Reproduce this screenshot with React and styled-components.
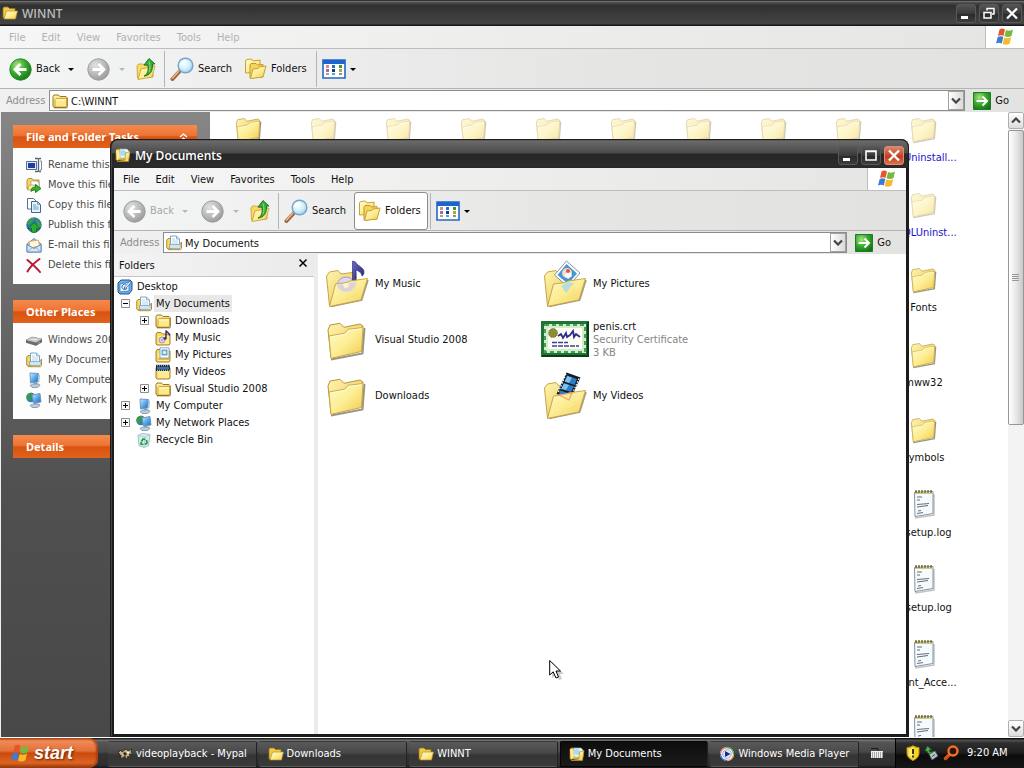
import React from "react";
import styled, { createGlobalStyle, css } from "styled-components";

const GlobalStyle = createGlobalStyle`
  * {
    box-sizing: border-box;
  }

  html, body, #root {
    height: 100%;
    margin: 0;
  }

  body {
    overflow: hidden;
    font-family: "DejaVu Sans Condensed", "Noto Sans", sans-serif;
    font-size: 11px;
    line-height: 14px;
    color: #111;
    cursor: default;
  }

  button, input {
    font: inherit;
    color: inherit;
    margin: 0;
    padding: 0;
    border: 0;
    background: none;
  }

  ul {
    list-style: none;
    margin: 0;
    padding: 0;
  }

  h1, h2 {
    margin: 0;
  }

  a {
    color: inherit;
    text-decoration: none;
  }
`;

/* ---------- Desktop ---------- */

const Desktop = styled.div`
  display: flex;
  flex-direction: column;
  height: 100vh;
  overflow: hidden;
  background: #fff;
`;

const Workspace = styled.main`
  position: relative;
  flex: 1;
  min-height: 0;
  display: flex;
`;

/* ---------- Windows ---------- */

const MainWindow = styled.section`
  flex: 1;
  min-width: 0;
  display: flex;
  flex-direction: column;
  background: #fff;
`;

const FloatingWindow = styled.section`
  position: absolute;
  top: 139px;
  left: 110px;
  right: 115px;
  bottom: 1px;
  display: flex;
  flex-direction: column;
  padding: 0 3px 3px 4px;
  border-radius: 8px 8px 0 0;
  overflow: hidden;
  background: linear-gradient(#2a2a2a, #6a6a6a 2px, #4a4a4a 14px, #262626 15px, #2c2c2c 28px, #1c1c1c 30px);
  box-shadow: inset 0 0 0 1px #1c1c1c, inset 2px 0 0 #444;
`;

const TitleBar = styled.header`
  display: flex;
  align-items: center;
  flex: none;
  height: ${(p) => (p.$floating ? "29px" : "26px")};
  padding: ${(p) => (p.$floating ? "3px 2px 0 1px" : "0 2px")};
  gap: 4px;
  ${(p) =>
    !p.$floating &&
    css`
      background: linear-gradient(#333 1px, #777 1px, #444 3px, #303030 6px, #3a3a3a 14px, #444 24px, #181818 25px);
    `}
`;

const WindowTitle = styled.h1`
  flex: 1;
  padding-top: 1px;
  font-family: "Open Sans", "Noto Sans", sans-serif;
  font-size: 12px;
  line-height: 16px;
  font-weight: 600;
  color: ${(p) => (p.$active ? "#fff" : "#b9b9b9")};
`;

const Caption = styled.button`
  display: flex;
  width: 20px;
  height: 19px;
  margin-left: -1px;
  border: 1px solid ${(p) => (p.$red ? "#e08a70" : "#585858")};
  border-radius: 3px;
  background: ${(p) =>
    p.$red ? "linear-gradient(#d98870, #c4492b 50%, #b93a18 52%, #e0714a)" : "linear-gradient(#555, #3a3a3a 50%, #2a2a2a 52%, #3c3c3c)"};
`;

const MenuBar = styled.nav`
  display: flex;
  flex: none;
  align-items: stretch;
  height: 23px;
  padding-left: 1px;
  border-bottom: 1px solid #bdbdbd;
  background: linear-gradient(to right, #f6f6f6, #e5e5e3);
  color: ${(p) => (p.$active ? "#111" : "#b2b2b2")};
`;

const MenuItem = styled.button`
  padding: 1px 8px 0;
`;

const Brand = styled.div`
  display: flex;
  align-items: center;
  justify-content: center;
  width: 39px;
  margin-left: auto;
  border-left: 1px solid #bdbdbd;
  background: #fff;
`;

const ToolBar = styled.div`
  display: flex;
  flex: none;
  align-items: center;
  height: 40px;
  padding: 1px 0 0 4px;
  border-bottom: 1px solid #b4b4b4;
  background: linear-gradient(to right, #f4f5f5, #e5e5e4 60%, #e2e2e1);
`;

const ToolButton = styled.button`
  display: flex;
  align-items: center;
  gap: 4px;
  flex: none;
  width: ${(p) => p.$width}px;
  height: 38px;
  padding-left: 5px;
  white-space: nowrap;
  color: ${(p) => (p.disabled ? "#a8a8a8" : "#111")};
  ${(p) =>
    p.$center &&
    css`
      justify-content: center;
      padding: 0;
    `}
  ${(p) =>
    p.$pressed &&
    css`
      border: 1px solid #8d8d8d;
      border-radius: 3px;
      background: #fff;
      padding-left: 4px;
    `}
`;

const Separator = styled.span`
  width: 1px;
  height: 36px;
  margin-left: ${(p) => p.$gap || 0}px;
  background: #b5b5b5;
`;

const AddressBar = styled.form`
  display: flex;
  flex: none;
  align-items: center;
  height: 23px;
  padding: 1px 15px 1px 6px;
  background: linear-gradient(to right, #f0f0f0, #e3e3e2);
`;

const AddressLabel = styled.label`
  width: 43px;
  color: #8d8d8d;
`;

const AddressField = styled.div`
  display: flex;
  flex: 1;
  align-items: center;
  gap: 3px;
  height: 21px;
  padding-left: 2px;
  border: 1px solid #8c8c8c;
  background: #fff;

  input {
    flex: 1;
    min-width: 0;
    padding-top: 2px;
    outline: none;
  }
`;

const DropButton = styled.button`
  display: flex;
  align-items: center;
  justify-content: center;
  width: 16px;
  height: 19px;
  border: 1px solid #a2a2a2;
  background: linear-gradient(to right, #fff, #dadada);
`;

const GoButton = styled.button`
  display: flex;
  align-items: center;
  gap: 4px;
  margin-left: 8px;
`;

const WindowBody = styled.div`
  display: flex;
  flex: 1;
  min-height: 0;
  background: #fff;
  border-left: ${(p) => (p.$edge ? "1px solid #eee" : "0")};
  border-bottom: ${(p) => (p.$edge ? "1px solid #fff" : "0")};
`;

/* ---------- Task pane ---------- */

const TaskPane = styled.aside`
  flex: none;
  display: flex;
  flex-direction: column;
  gap: 16px;
  width: 209px;
  padding: 13px 13px 0 12px;
  background: linear-gradient(#868686, #6a6a6a 30%, #505050 60%, #484848);
`;

const PanelHead = styled.h2`
  display: flex;
  align-items: center;
  justify-content: space-between;
  height: 23px;
  padding: 1px 8px 0 13px;
  font-family: "Noto Sans", sans-serif;
  font-size: 11px;
  font-weight: 700;
  color: #fff;
  background: linear-gradient(#f58a4c, #ee7434 45%, #d9530f 52%, #e0621c);
`;

const PanelList = styled.ul`
  padding: 7px 0 9px 13px;
  background: #fdfdfd;
  color: #4b4b4b;

  a {
    display: flex;
    align-items: center;
    gap: 6px;
    height: 20px;
    white-space: nowrap;
  }
`;

/* ---------- Icon view ---------- */

const IconGrid = styled.ul`
  flex: 1;
  min-width: 0;
  display: grid;
  grid-template-columns: repeat(10, 75px);
  grid-auto-rows: 75px;
  padding: 1px 0 0 1px;
  overflow: hidden;
`;

const IconCell = styled.li`
  display: flex;
  flex-direction: column;
  align-items: center;
  gap: 6px;
  grid-column: ${(p) => p.$column};
  color: ${(p) => (p.$compressed ? "#1a10c8" : "#111")};

  svg {
    opacity: ${(p) => (p.$hidden ? 0.5 : 1)};
  }
`;

const ScrollBar = styled.div`
  display: flex;
  flex-direction: column;
  flex: none;
  width: 16px;
  background: #f3f3f3;
`;

const ScrollButton = styled.button`
  display: flex;
  align-items: center;
  justify-content: center;
  height: 17px;
  border: 1px solid #b0b0b0;
  border-radius: 2px;
  background: linear-gradient(#fff, #dcdcdc);
`;

const ScrollTrack = styled.div`
  flex: 1;
  padding-top: 1px;
`;

const ScrollThumb = styled.div`
  display: flex;
  align-items: center;
  justify-content: center;
  height: 50%;
  border: 1px solid #979797;
  border-radius: 2px;
  background: linear-gradient(to right, #fff, #e8e8e8 50%, #c8c8c8);
`;

/* ---------- Folder tree ---------- */

const TreePane = styled.aside`
  flex: none;
  width: 204px;
  border-right: 4px solid #ececec;
`;

const TreeHead = styled.div`
  display: flex;
  align-items: center;
  justify-content: space-between;
  height: 23px;
  padding: 2px 6px 0 5px;
  border-bottom: 1px solid #c6c6c6;
  background: linear-gradient(to right, #f3f3f3, #ebebeb);

  button {
    display: flex;
    height: 17px;
  }
`;

const Tree = styled.ul`
  padding: 1px 0 0 3px;
`;

const TreeRow = styled.li`
  display: flex;
  align-items: center;
  height: 17px;
  padding-left: ${(p) => Math.max(0, p.$level - 1) * 19}px;
`;

const ExpandSlot = styled.span`
  display: flex;
  width: 19px;
  padding-left: 4px;
`;

const ExpandButton = styled.button`
  display: flex;
`;

const TreeLabel = styled.span`
  margin-left: 2px;
  padding: 2px 2px 1px 2px;
  white-space: nowrap;
  background: ${(p) => (p.$selected ? "#e8e8e8" : "transparent")};
`;

/* ---------- Tile view ---------- */

const TileGrid = styled.ul`
  flex: 1;
  display: grid;
  grid-template-columns: repeat(2, 218px);
  grid-auto-rows: 56px;
  align-content: start;
  padding: 1px 0 0 5px;
`;

const Tile = styled.li`
  display: flex;
  align-items: center;
  gap: 4px;
  line-height: 13px;

  small {
    display: block;
    font-size: 11px;
    color: #858585;
  }
`;

/* ---------- Taskbar ---------- */

const TaskBar = styled.footer`
  display: flex;
  flex: none;
  height: 30px;
  color: #fff;
  background: linear-gradient(#222 1px, #777 2px, #555 4px, #484848 14px, #333 16px, #2e2e2e 27px, #151515);
`;

const StartButton = styled.button`
  display: flex;
  align-items: center;
  gap: 3px;
  width: 98px;
  margin-right: 9px;
  padding-left: 10px;
  border-radius: 0 9px 9px 0;
  font-family: "Liberation Sans", sans-serif;
  font-size: 18px;
  font-weight: 700;
  font-style: italic;
  text-shadow: 1px 1px 2px #6a2400;
  background: linear-gradient(#a8400f, #f08a58 3px, #e47038 13px, #cc4a0c 15px, #dc6424 25px, #8c340a);
  box-shadow: inset -2px 0 2px #a8400f;
`;

const TaskButton = styled.button`
  display: flex;
  flex: 1;
  align-items: center;
  gap: 3px;
  min-width: 0;
  margin: 3px 1px 1px;
  padding: 1px 0 1px 8px;
  white-space: nowrap;
  border: 1px solid ${(p) => (p.$active ? "#050505" : "transparent")};
  border-right-color: #222;
  border-radius: 2px;
  background: ${(p) => (p.$active ? "linear-gradient(#0d0d0d, #1b1b1b)" : "linear-gradient(#5a5a5a, #484848 45%, #353535 55%, #3a3a3a)")};
`;

const KeyboardSlot = styled.div`
  display: flex;
  align-items: center;
  justify-content: center;
  width: 35px;
`;

const Tray = styled.div`
  display: flex;
  align-items: center;
  gap: 3px;
  width: 129px;
  padding-left: 9px;
  border-left: 1px solid #000;
  background: linear-gradient(#111 1px, #555 2px, #2e2e2e 5px, #1d1d1d 15px, #0c0c0c 17px, #161616);

  time {
    margin-left: 5px;
    white-space: nowrap;
  }
`;

const Pointer = styled.svg`
  position: absolute;
  left: 549px;
  top: 659px;
`;

const SharedDefs = styled.svg`
  position: absolute;
`;

/* ---------- Drawings ---------- */

const Gradients = () => (
  <SharedDefs width="0" height="0" aria-hidden="true">
    <defs>
      <linearGradient id="folder" x1="0" y1="0" x2="1" y2="1">
        <stop offset="0" stopColor="#fffbcc" />
        <stop offset="0.5" stopColor="#fdee94" />
        <stop offset="1" stopColor="#f0ca4c" />
      </linearGradient>
      <linearGradient id="folderBack" x1="0" y1="0" x2="1" y2="1">
        <stop offset="0" stopColor="#fff6b0" />
        <stop offset="1" stopColor="#e6bf48" />
      </linearGradient>
      <radialGradient id="green" cx="0.35" cy="0.3" r="0.8">
        <stop offset="0" stopColor="#a4e67c" />
        <stop offset="0.5" stopColor="#39a82c" />
        <stop offset="1" stopColor="#12701a" />
      </radialGradient>
      <radialGradient id="grey" cx="0.35" cy="0.3" r="0.8">
        <stop offset="0" stopColor="#e2e2e2" />
        <stop offset="0.6" stopColor="#b4b4b4" />
        <stop offset="1" stopColor="#959595" />
      </radialGradient>
      <radialGradient id="lens" cx="0.4" cy="0.35" r="0.7">
        <stop offset="0" stopColor="#fff" />
        <stop offset="0.6" stopColor="#cdeefb" />
        <stop offset="1" stopColor="#8ecbee" />
      </radialGradient>
      <linearGradient id="screen" x1="0" y1="0" x2="1" y2="1">
        <stop offset="0" stopColor="#d4efff" />
        <stop offset="0.5" stopColor="#5aabea" />
        <stop offset="1" stopColor="#2460c0" />
      </linearGradient>
      <linearGradient id="note" x1="0" y1="0" x2="1" y2="1">
        <stop offset="0" stopColor="#6a6ac8" />
        <stop offset="1" stopColor="#23236c" />
      </linearGradient>
    </defs>
  </SharedDefs>
);

const FolderShape = ({ size = 16 }) => (
  <svg width={size} height={size} viewBox="0 0 48 48">
    <path d="M8 44.500 39.500 38.500 41.500 13" fill="none" stroke="#6c6654" strokeWidth="2" opacity="0.7" />
    <path d="M5 15 7 10 17 8.300 21 12.300 37 9 40 11 38.500 36 8 43Z" fill="url(#folderBack)" stroke="#b8943a" strokeWidth="1" strokeLinejoin="round" />
    <path d="M6 21 21.500 18.300 25 14.300 40 12.500 38.500 36.500 8 43.300Z" fill="url(#folder)" stroke="#c8a444" strokeWidth=".9" strokeLinejoin="round" />
    <path d="M7.500 22 22 19.500 26 15.500 38.500 13.800" fill="none" stroke="#fffbe0" strokeWidth="1" />
  </svg>
);

const SmallFolder = () => (
  <svg width="16" height="16" viewBox="0 0 16 16">
    <path d="M1 13V3.500L2 2h4.500L8 3.500h6l1 1V13l-1 1.500H2z" fill="url(#folderBack)" stroke="#9c7616" />
    <path d="M3 13.500V6.500L4 5.500h10.500V13l-.5 1H3z" fill="#fde98a" stroke="#c69a2c" strokeWidth=".8" />
    <path d="M4 7h10" stroke="#fffbdc" />
    <path d="M2 15h13l.7-1.500V5" fill="none" stroke="#6e5c26" strokeWidth=".6" />
  </svg>
);

const OpenSmallFolder = ({ content }) => (
  <svg width="16" height="16" viewBox="0 0 16 16">
    <path d="M1 13V3l1-1h4l1.500 1.500H13V13z" fill="#f0cb4c" stroke="#94721a" strokeWidth=".8" />
    {content && (
      <>
        <path d="M5 2h7l2 2v7H5z" fill="#f2fbff" stroke="#8fa8b8" strokeWidth=".7" />
        <circle cx="8" cy="6" r="3" fill="#a8dcf4" />
        <path d="M2 14 1 3.500l3-.5 1 7z" fill="#fdeb96" />
        <path d="M2 14.500 10 13 10.500 6 15 4.500 13.500 14.500z" fill="url(#folder)" stroke="#b48c22" strokeWidth=".7" />
      </>
    )}
    {!content && <path d="M2 14 4.500 6H15.500L13.500 14z" fill="url(#folder)" stroke="#b48c22" strokeWidth=".7" />}
  </svg>
);

const DocsIcon = () => (
  <svg width="16" height="16" viewBox="0 0 16 16">
    <path d="M.7 13V5L2 3.500h3V14H2z" fill="#f6d960" stroke="#9c7616" strokeWidth=".8" />
    <path d="M4.500 1h6l3 3v8h-9z" fill="#fff" stroke="#6a9cc4" strokeWidth=".9" />
    <path d="M10.500 1v3h3" fill="#bfe2f8" stroke="#6a9cc4" strokeWidth=".7" />
    <path d="M6 4h3M6 6h6M6 8h6" stroke="#a4c8e4" strokeWidth=".8" />
    <path d="M3.500 13.500V9.500h10l1.500-2v5l-1 1z" fill="#d2e4ee" stroke="#7498b0" strokeWidth=".7" />
    <path d="M1.500 13.500 3 14.700h11.500l1-1.500V7" fill="none" stroke="#b88c20" />
  </svg>
);

const MediaFolder = ({ kind }) => (
  <svg width="16" height="16" viewBox="0 0 16 16">
    <path d="M1 14V4l1-1.500h4L7.500 4H15v10l-1 1H2z" fill="#f7d964" stroke="#9c7616" strokeWidth=".9" />
    <path d="M3 6h11v8H3z" fill="#fdeb96" />
    {kind === "music" && (
      <>
        <circle cx="7" cy="10" r="3" fill="#d8d2ee" stroke="#8878a8" strokeWidth=".7" />
        <circle cx="7" cy="10" r=".8" fill="#e05a30" />
        <path d="M11 8V.5c1 2 3.500 2 3.500 5" fill="none" stroke="#2c2878" strokeWidth="1.400" />
        <ellipse cx="10" cy="8.500" rx="1.600" ry="1.200" fill="#2c2878" />
      </>
    )}
    {kind === "pictures" && (
      <>
        <path d="M5 .800h9V11H5z" fill="#fff" stroke="#6c94b4" strokeWidth=".8" />
        <path d="M6.500 2.500h6v6h-6z" fill="#59a9dc" />
        <circle cx="9.500" cy="5.500" r="1.800" fill="#f6e5d8" />
        <path d="M3 12h11" stroke="#b88a24" />
      </>
    )}
    {kind === "videos" && (
      <>
        <path d="M1 .8h14V7H1z" fill="#1c2434" />
        <path d="M2 3h12v2.500H2z" fill="#3474b4" />
        <path d="M2 1.800h13M2 6.300h13" stroke="#fff" strokeDasharray="1 1" strokeWidth=".8" />
      </>
    )}
  </svg>
);

const DesktopIcon = () => (
  <svg width="16" height="16" viewBox="0 0 16 16">
    <path d="M1 4 4 1h9l2 2v8l-3 4H3l-2-2z" fill="#6cb0e4" stroke="#1c5498" />
    <path d="M3 5 12 3v9l-9 1z" fill="#eaf6ff" stroke="#2c6cac" strokeWidth=".7" />
    <path d="M9 5C6.500 4.500 4.500 6.500 5 8.500S9 11.500 10 9" fill="none" stroke="#2464a4" />
    <path d="M7 9.500 8 7.500 12.500 2.500 14 3.500 9 9z" fill="#fff" stroke="#2464a4" strokeWidth=".8" />
  </svg>
);

const ComputerIcon = ({ network }) => (
  <svg width="16" height="16" viewBox="0 0 16 16">
    {network && (
      <>
        <circle cx="5" cy="5.500" r="4.800" fill="#2c7cc8" />
        <path d="M1 3.500C3 0 6 0 7 2L4.500 5 5 8 2.500 9C1 7 0 5 1 3.500z" fill="#3c9c3c" />
      </>
    )}
    <path d={network ? "M6 3 14 1.500 15 10 7.500 11z" : "M4 1 12.500 1.500 12 10 4.500 11z"} fill="url(#screen)" stroke="#6c90b8" strokeWidth=".9" />
    <path d="M12.500 2.500 14 3l-.5 7-2 1" fill="#b4c6d6" opacity={network ? 0 : 1} />
    <path d="M8 11h3l.5 2H7.500z" fill="#8fa4b8" />
    <path d="M4 13.500 7 12h6l1 1.500-2.500 2H6z" fill="#bccbd8" stroke="#7088a0" strokeWidth=".7" />
  </svg>
);

const RecycleIcon = () => (
  <svg width="16" height="16" viewBox="0 0 16 16">
    <path d="M2 3.500 6 1.500l8 1-1.500 11L8 15.500l-5-2z" fill="#d9eef4" stroke="#9ab8c4" strokeWidth=".9" />
    <path d="M2 3.500 9 5l5-2.500M9 5 8 15" fill="none" stroke="#a4c4d0" strokeWidth=".8" />
    <path d="M5.500 9.500 7 7l2.500.5M10.500 8l.5 3-2 1.500M7.500 12.500 5 12l.3-2" fill="none" stroke="#22a03a" strokeWidth="1.700" />
  </svg>
);

const DriveIcon = () => (
  <svg width="16" height="16" viewBox="0 0 16 16">
    <path d="M0 8 6 5l10 2v3l-6 3.500L0 10.500z" fill="#6c6c6c" stroke="#555" strokeWidth=".5" />
    <path d="M0 8 6 5 16 7 10 10.500z" fill="#cecece" />
    <ellipse cx="8" cy="7.500" rx="3.500" ry="1.300" fill="#efefef" stroke="#999" strokeWidth=".5" />
    <path d="M12 11.500 14 10.300" stroke="#7cd07c" />
  </svg>
);

const RenameIcon = () => (
  <svg width="16" height="16" viewBox="0 0 16 16">
    <path d="M.5 4.500h10v8H.5z" fill="#e8eef8" stroke="#5a6a88" />
    <path d="M2 6h7v5H2z" fill="#1a3ea8" />
    <path d="M9 1.500h2.500L12.500 2l1-.5H15M12.500 2v12M9 14.500h2.500l1-.5 1 .5H15" fill="none" stroke="#54617a" strokeWidth="1.300" />
    <path d="M14 4h1.500v9H14" fill="none" stroke="#7a8aa4" />
  </svg>
);

const MoveIcon = () => (
  <svg width="16" height="16" viewBox="0 0 16 16">
    <path d="M1 12V3l1.500-1.500H6L7.500 3H13v9z" fill="#f6d764" stroke="#a07c1c" strokeWidth=".8" />
    <path d="M5 4h6l2 2v6H5z" fill="#fff" stroke="#88a" strokeWidth=".6" />
    <path d="M1.500 13 3.500 8H11v5z" fill="#fdeb96" stroke="#b08a28" strokeWidth=".6" />
    <path d="M5 14.500C5 11 7 10 9.500 10V7.500L15 11.500 9.500 15.500V13C8 13 6 13 5 14.500z" fill="#36b430" stroke="#0e6a18" strokeWidth=".8" />
  </svg>
);

const CopyIcon = () => (
  <svg width="16" height="16" viewBox="0 0 16 16">
    <path d="M1.500 1.500h6l2.500 2.500v8H1.500z" fill="#fff" stroke="#55708c" />
    <path d="M5.500 4.500h6l3 3v8h-9z" fill="#e4f3fc" stroke="#45678a" />
    <path d="M11.500 4.500v3h3M7 8h3M7 10h5.500M7 12h5.500" fill="none" stroke="#6b9cc4" />
  </svg>
);

const PublishIcon = () => (
  <svg width="16" height="16" viewBox="0 0 16 16">
    <circle cx="8" cy="8" r="7.300" fill="#2c74c0" stroke="#144c80" strokeWidth=".6" />
    <path d="M2 4C4 1 7 .7 9 1.200L6 5 3 8 1 7zM10 2c3 1 5 4 5 7l-3 4" fill="#38a444" />
    <path d="M8 5.500 14 11.500H10.500v3.500C9 15.500 7 15.500 5.500 15v-3.500h-3.500z" fill="#2eac2e" stroke="#0f6420" strokeWidth=".8" />
  </svg>
);

const MailIcon = () => (
  <svg width="16" height="16" viewBox="0 0 16 16">
    <path d="M1 7 8 1.500 15 7v8H1z" fill="#a8cdec" stroke="#5a82ac" strokeWidth=".9" />
    <path d="M3 4.500 12.500 3 13.500 9 4 11z" fill="#fff4dc" stroke="#d49a54" strokeWidth=".8" />
    <path d="M1 7.500 8 11.500 15 7.500V15H1z" fill="#d4e9f8" stroke="#5a82ac" strokeWidth=".9" />
    <path d="M1 15 6.500 10.500M15 15 9.500 10.500" stroke="#7ca2c8" strokeWidth=".8" />
  </svg>
);

const DeleteIcon = () => (
  <svg width="16" height="16" viewBox="0 0 16 16">
    <path d="M1.500 3C5 6 10 10 14 15M13.500 2C8 6 4 10 1.500 14.500" fill="none" stroke="#b81c34" strokeWidth="2" strokeLinecap="round" />
  </svg>
);

const FlagIcon = ({ size = 20 }) => (
  <svg width={size} height={size} viewBox="0 0 20 20">
    <path d="M4.500 2.500C6.500 1 8.500 1.500 10 2.500L8.500 9C7 8 5 8 3 9z" fill="#e4572c" />
    <path d="M11 3C13 4 15 4 18 2.500L16.500 9C14 10.500 11.500 10 9.500 9.300z" fill="#74b83c" />
    <path d="M2.700 10C5 8.800 6.700 9 8.300 10L6.800 16.500C5 15.500 3 15.500 1 16.500z" fill="#3b7cd4" />
    <path d="M9.200 10.500C11.500 11.500 14 11.500 16.200 10L14.700 16.500C12 18 9.500 18 7.700 17z" fill="#f4bc2c" />
  </svg>
);

const ArrowCircle = ({ forward, tone }) => (
  <svg width="23" height="23" viewBox="0 0 23 23">
    <circle cx="11.500" cy="11.500" r="10.700" fill={`url(#${tone})`} stroke={tone === "green" ? "#2c8830" : "#9c9c9c"} />
    <path
      d={forward ? "M5.500 11.500H16M11.500 6 17 11.500 11.500 17" : "M17.500 11.500H7M11.500 6 6 11.500 11.500 17"}
      fill="none"
      stroke="#fff"
      strokeWidth="2.800"
    />
  </svg>
);

const Caret = ({ faded }) => (
  <svg width="6" height="3" viewBox="0 0 6 3">
    <path d="M0 0h6L3 3z" fill={faded ? "#b8b8b8" : "#000"} />
  </svg>
);

const UpIcon = () => (
  <svg width="22" height="24" viewBox="0 0 22 24">
    <path d="M2.500 21 2 9l1.500-2h4L10 8.500 18 8v12z" fill="#f6da64" stroke="#cca43c" strokeWidth=".9" />
    <path d="M3 22.500 6 12l14-3-3 11z" fill="url(#folder)" stroke="#cca43c" strokeWidth=".9" />
    <path d="M9 19C13 17.500 13.500 13 13 8H9L14 1.500 20 7H17.500C18 14 15 18.500 9 19z" fill="#3aac3a" stroke="#12701c" strokeWidth=".9" />
    <path d="M14 4.500C15 8 15.500 12 14 15" fill="none" stroke="#8edc7c" />
  </svg>
);

const SearchIcon = () => (
  <svg width="24" height="24" viewBox="0 0 24 24">
    <path d="M2.500 22 9 15" stroke="#9c6844" strokeWidth="4" strokeLinecap="round" />
    <path d="M2.500 21 8.500 14.500" stroke="#f0b486" strokeWidth="1.700" strokeLinecap="round" />
    <circle cx="15.500" cy="8.500" r="7.300" fill="url(#lens)" stroke="#7aa4cc" strokeWidth="1.500" />
    <path d="M11 8C11.500 5.500 13.500 4 16 4" fill="none" stroke="#fff" strokeWidth="1.600" />
  </svg>
);

const FoldersIcon = () => (
  <svg width="22" height="22" viewBox="1 0 22 22">
    <path d="M1.500 15V3l1-1.500 5-.5L9 3l7-1v12z" fill="url(#folder)" stroke="#c8a138" />
    <path d="M6 20V7l1-1.500h5L13.500 7 19 6.500V19z" fill="#f4d45c" stroke="#c19830" />
    <path d="M6.500 20.500 9 11l5-.5 1-1.500 7-1-3 11z" fill="url(#folder)" stroke="#c8a138" />
  </svg>
);

const ViewsIcon = () => (
  <svg width="24" height="20" viewBox="0 0 24 20">
    <path d="M1 1h22v18H1z" fill="#fff" stroke="#2468c4" strokeWidth="1.600" />
    <path d="M1 1h22v4H1z" fill="#1c64d0" />
    <path d="M4 6h3v3H4zM4 14h3v2H4z" fill="#d88c80" />
    <path d="M10 6h3v3h-3z" fill="#2c6cd0" />
    <path d="M17 6h3v3h-3z" fill="#2c9c34" />
    <path d="M4 10h3v3H4z" fill="#9474b0" />
    <path d="M10 10h3v3h-3z" fill="#183c80" />
    <path d="M17 10h3v3h-3z" fill="#c89c34" />
    <path d="M10 14h3v2h-3z" fill="#52a4e0" />
    <path d="M17 14h3v2h-3z" fill="#889c54" />
  </svg>
);

const GoIcon = () => (
  <svg width="18" height="18" viewBox="0 0 18 18">
    <path d="M.5.500h17v17H.500z" fill="url(#green)" stroke="#1c7c28" />
    <path d="M3.500 9h10M9.500 4.500 14 9 9.500 13.500" fill="none" stroke="#fff" strokeWidth="2" />
  </svg>
);

const Chevron = ({ up }) => (
  <svg width="10" height="7" viewBox="0 0 10 7">
    <path d={up ? "M1 5.500 5 1.500 9 5.500" : "M1 1.500 5 5.500 9 1.500"} fill="none" stroke="#444" strokeWidth="2.200" />
  </svg>
);

const CollapseIcon = () => (
  <svg width="11" height="11" viewBox="0 0 11 11">
    <path d="M2 5 5.500 2 9 5M2 9 5.500 6 9 9" fill="none" stroke="#fff" strokeWidth="1.300" />
  </svg>
);

const CaptionGlyph = ({ kind }) => (
  <svg width="18" height="17" viewBox="0 0 18 17" fill="none" stroke="#fff">
    {kind === "Minimize" && <path d="M4 12.500h7" strokeWidth="3" />}
    {kind === "Maximize" && <path d="M4 4h10v9H4zM3.500 4.500h11" strokeWidth="1.600" />}
    {kind === "Restore" && <path d="M4 7.500h7v5.500H4zM7 5.500V3.500h7V9h-2" strokeWidth="1.500" />}
    {kind === "Close" && <path d="M4 3.500 14 13.500M14 3.500 4 13.500" strokeWidth="2.300" />}
  </svg>
);

const Expander = ({ open }) => (
  <svg width="9" height="9" viewBox="0 0 9 9">
    <path d="M.5.500h8v8h-8z" fill="#fafafa" stroke="#8f8f8f" />
    <path d={open ? "M2 4.500h5" : "M2 4.500h5M4.500 2v5"} stroke="#000" />
  </svg>
);

const LogFile = () => (
  <svg width="32" height="32" viewBox="0 0 32 32">
    <path d="M7 30 26 27V6" fill="none" stroke="#c4c4c4" strokeWidth="1.500" />
    <path d="M6.500 4.500 25 3.500V25.500L7 28.500z" fill="#f5fafd" stroke="#8494a8" />
    <path d="M7 3.500h18" stroke="#7c7440" strokeWidth="2.500" strokeDasharray="2 1" />
    <path d="M7 5.500h18" stroke="#d8cc70" />
    <path d="M9 9h5M9 12h3M9 16.500 21 15.500M9 19 20 17.500M10 23l3-.500M9 25.500l6-1" stroke="#54606c" strokeWidth=".9" />
  </svg>
);

const OpenFolderLarge = ({ kind }) => (
  <svg width="48" height="48" viewBox="0 0 48 48">
    <path d="M8 47.300 38.500 41 44.800 21" fill="none" stroke="#77705a" strokeWidth="2" opacity=".7" />
    <path d="M3.500 17 6.500 13 15 11.500 18 15 33 13 34 36 6.500 47z" fill="url(#folderBack)" stroke="#c8a444" />
    {kind === "music" && (
      <>
        <circle cx="23" cy="27" r="9" fill="#dcd8f2" stroke="#a49cc8" />
        <path d="M29.500 22V2L32.500 3C34 7 41 8 41 13 41 15 40 16.500 39 17 38.500 13 35 12 33 11V23z" fill="url(#note)" stroke="#23236c" strokeWidth=".6" />
      </>
    )}
    {kind === "pictures" && (
      <>
        <path d="M25.500 2 39 14 27 28 13.500 16z" fill="#fff" stroke="#8296a4" />
        <path d="M25.500 5 36 14.500 27 25 16.500 16z" fill="#4894d4" />
        <circle cx="26" cy="14" r="5" fill="#f8d8c4" />
        <path d="M23 16 28 12 31 17 27 20z" fill="#fff" />
        <circle cx="27" cy="12" r="2" fill="#d4584c" />
      </>
    )}
    {kind === "videos" && (
      <>
        <path d="M25.500 1.500 39.500 6.500 29.500 28 15.500 23z" fill="#141c24" />
        <path d="M26 4.500 36 8 33.500 14 23.500 10.500zM23 12 33 15.500 30 21 20 18zM19.500 19.500 29.500 23 28 26 18 22.500z" fill="#2c7cc8" />
        <path d="M26.500 5 31 6.700 28 12 23.800 10.500zM23 12.500 28 14 25 19 20.300 17.800z" fill="#7cc4ec" />
        <path d="M25 3 17 22M38 7.500 29.500 27" stroke="#fff" strokeWidth="1.200" strokeDasharray="1.500 1.500" />
      </>
    )}
    <path d="M12.500 25 24 23.500 27 22 44.500 19.500 38 41 6.500 47.500z" fill="url(#folder)" stroke="#c8a444" strokeLinejoin="round" opacity=".94" />
    {kind === "music" && (
      <>
        <path d="M14 26A9 8 0 0 0 32.500 23L26 24A3 3 0 0 1 20 25z" fill="#d5cde6" opacity=".85" />
        <circle cx="23" cy="26.500" r="2.500" fill="#fdf4c8" />
      </>
    )}
    {kind === "pictures" && <path d="M20 27 25 34 33 24 27 23z" fill="#a8d8e8" opacity=".8" />}
    {kind === "videos" && <path d="M18 24 28 29 31 22z" fill="#fbe6a8" stroke="#e8a868" strokeWidth="1.200" />}
  </svg>
);

const CertificateIcon = () => (
  <svg width="48" height="48" viewBox="0 0 48 48">
    <path d="M0 6h48v36H0z" fill="#1f7434" />
    <path d="M1 41h46V7" fill="none" stroke="#0c3c1c" strokeWidth="2" />
    <path d="M3 9h42v29H3z" fill="#cfeecb" />
    <path d="M4 10h40v27H4z" fill="none" stroke="#4c9c58" strokeWidth="2" strokeDasharray="4 3" />
    <path d="M7 13h34v21H7z" fill="#fffef2" />
    <circle cx="12" cy="18" r="4.500" fill="#8c8c34" stroke="#6c6c24" strokeDasharray="1 1" />
    <path d="M17 21 20 19l2 4 3-5 1 4 3-2 3-4 1 6 2-3 4 3" fill="none" stroke="#2c2c94" strokeWidth="1.800" />
    <path d="M11 27.500h16M11 31h27" stroke="#3c3ca4" strokeWidth="1.700" strokeDasharray="5 1" />
  </svg>
);

const MypalIcon = () => (
  <svg width="16" height="16" viewBox="0 0 16 16">
    <path d="M1 7 4 4l1 2 4-3 2 2 4-2-1 3 1.500 2-3 0 .5 4-2-2-2 4-1-4-4 3V9L2 11l1-3z" fill="#c8b48c" stroke="#2c2414" strokeWidth=".8" />
    <path d="M6 7l2-1 2 2-2 2z" fill="#30281c" />
    <circle cx="11" cy="6.500" r=".9" fill="#fff" />
  </svg>
);

const MediaPlayerIcon = () => (
  <svg width="16" height="16" viewBox="0 0 16 16">
    <circle cx="8" cy="8" r="7" fill="#fff" />
    <path d="M8 1.500A6.500 6.500 0 0 1 14.500 8" fill="none" stroke="#54a84c" strokeWidth="1.300" />
    <path d="M14.500 8A6.500 6.500 0 0 1 8 14.500" fill="none" stroke="#e4a43c" strokeWidth="1.300" />
    <path d="M8 14.500A6.500 6.500 0 0 1 1.500 8" fill="none" stroke="#3c6cd0" strokeWidth="1.300" />
    <path d="M1.500 8A6.500 6.500 0 0 1 8 1.500" fill="none" stroke="#e07c6c" strokeWidth="1.300" />
    <circle cx="8" cy="8" r="4.300" fill="#e4ecfa" stroke="#6478b8" strokeWidth=".6" />
    <path d="M6 5 11.500 8 6 11z" fill="#182c84" />
  </svg>
);

const KeyboardIcon = () => (
  <svg width="14" height="12" viewBox="0 0 14 12">
    <path d="M1 1.500h7v2" fill="none" stroke="#181818" />
    <path d="M1 4h12v7H1z" fill="#f0f0f0" />
    <path d="M2 6h11M2 8h11M2 10h11" stroke="#333" strokeWidth=".8" strokeDasharray="1 1" />
  </svg>
);

const ShieldIcon = () => (
  <svg width="16" height="16" viewBox="0 0 16 16">
    <path d="M8 .7C10 2 12 2.500 14 2.500V8c0 4-3 6-6 7.500C5 14 2 12 2 8V2.500C4 2.500 6 2 8 .7z" fill="#f8d420" stroke="#b8941c" />
    <path d="M4 4C5 4 7 3.500 8 2.500V13C5 12 4 10 4 8z" fill="#fdee80" />
    <path d="M8 4v5M8 10.500v2" stroke="#222" strokeWidth="1.800" />
  </svg>
);

const SafelyRemoveIcon = () => (
  <svg width="16" height="16" viewBox="0 0 16 16">
    <path d="M5 9 11 6l3 5-6 4z" fill="#b8c4c8" stroke="#4c585c" strokeWidth=".8" />
    <path d="M8 11.500 11 9.500" stroke="#384448" />
    <path d="M9 6C7 8 5 7 5 5H7.500L3.500 1 1 6h2C3.500 9 7 10 9 6z" fill="#44b448" stroke="#186c24" strokeWidth=".7" />
  </svg>
);

const FindTrayIcon = () => (
  <svg width="16" height="16" viewBox="0 0 16 16">
    <path d="M2.500 13.500 7 9" stroke="#d4501c" strokeWidth="3.500" strokeLinecap="round" />
    <circle cx="10" cy="6" r="4.500" fill="#2c1408" stroke="#f0702c" strokeWidth="2.400" />
  </svg>
);

/* ---------- Data ---------- */

const menus = ["File", "Edit", "View", "Favorites", "Tools", "Help"];

const fileTasks = [
  ["Rename this file", RenameIcon],
  ["Move this file", MoveIcon],
  ["Copy this file", CopyIcon],
  ["Publish this file", PublishIcon],
  ["E-mail this file", MailIcon],
  ["Delete this file", DeleteIcon],
];

const otherPlaces = [
  ["Windows 2000", DriveIcon],
  ["My Documents", DocsIcon],
  ["My Computer", ComputerIcon],
  ["My Network Places", () => <ComputerIcon network />],
];

const lastColumn = [
  { name: "$NUninstall...", hidden: true, compressed: true },
  { name: "$SQLUninst...", hidden: true, compressed: true },
  { name: "Fonts" },
  { name: "mww32" },
  { name: "Symbols" },
  { name: "ntsetup.log", log: true },
  { name: "iissetup.log", log: true },
  { name: "Event_Acce...", log: true },
  { name: "", log: true },
];

const tree = [
  { name: "Desktop", level: 0, icon: <DesktopIcon /> },
  { name: "My Documents", level: 1, icon: <DocsIcon />, open: true, selected: true },
  { name: "Downloads", level: 2, icon: <SmallFolder />, open: false },
  { name: "My Music", level: 2, icon: <MediaFolder kind="music" /> },
  { name: "My Pictures", level: 2, icon: <MediaFolder kind="pictures" /> },
  { name: "My Videos", level: 2, icon: <MediaFolder kind="videos" /> },
  { name: "Visual Studio 2008", level: 2, icon: <SmallFolder />, open: false },
  { name: "My Computer", level: 1, icon: <ComputerIcon />, open: false },
  { name: "My Network Places", level: 1, icon: <ComputerIcon network />, open: false },
  { name: "Recycle Bin", level: 1, icon: <RecycleIcon /> },
];

const tiles = [
  { name: "My Music", icon: <OpenFolderLarge kind="music" /> },
  { name: "My Pictures", icon: <OpenFolderLarge kind="pictures" /> },
  { name: "Visual Studio 2008", icon: <FolderShape size={48} /> },
  { name: "penis.crt", icon: <CertificateIcon />, details: ["Security Certificate", "3 KB"] },
  { name: "Downloads", icon: <FolderShape size={48} /> },
  { name: "My Videos", icon: <OpenFolderLarge kind="videos" /> },
];

const tasks = [
  { name: "videoplayback - Mypal", icon: <MypalIcon /> },
  { name: "Downloads", icon: <OpenSmallFolder /> },
  { name: "WINNT", icon: <OpenSmallFolder /> },
  { name: "My Documents", icon: <OpenSmallFolder content />, active: true },
  { name: "Windows Media Player", icon: <MediaPlayerIcon /> },
];

/* ---------- Parts ---------- */

function WindowChrome({ title, icon, active, path, pathIcon }) {
  const fieldId = active ? "address-documents" : "address-winnt";

  return (
    <>
      <TitleBar $floating={active}>
        {icon}
        <WindowTitle $active={active}>{title}</WindowTitle>
        {["Minimize", active ? "Maximize" : "Restore", "Close"].map((kind) => (
          <Caption key={kind} type="button" aria-label={kind} $red={active && kind === "Close"}>
            <CaptionGlyph kind={kind} />
          </Caption>
        ))}
      </TitleBar>
      <MenuBar $active={active}>
        {menus.map((menu) => (
          <MenuItem key={menu} type="button">
            {menu}
          </MenuItem>
        ))}
        <Brand>
          <FlagIcon />
        </Brand>
      </MenuBar>
      <ToolBar>
        <ToolButton type="button" $width={58} disabled={active}>
          <ArrowCircle tone={active ? "grey" : "green"} />
          Back
        </ToolButton>
        <ToolButton type="button" $width={18} $center aria-label="Back history">
          <Caret faded={active} />
        </ToolButton>
        <ToolButton type="button" $width={37} $center disabled aria-label="Forward">
          <ArrowCircle forward tone="grey" />
        </ToolButton>
        <ToolButton type="button" $width={10} $center disabled aria-label="Forward history">
          <Caret faded />
        </ToolButton>
        <ToolButton type="button" $width={37} $center aria-label="Up">
          <UpIcon />
        </ToolButton>
        <Separator />
        <ToolButton type="button" $width={75}>
          <SearchIcon />
          Search
        </ToolButton>
        <ToolButton type="button" $width={74} $pressed={active}>
          <FoldersIcon />
          Folders
        </ToolButton>
        <Separator $gap={2} />
        <ToolButton type="button" $width={44} $center aria-label="Views">
          <ViewsIcon />
          <Caret />
        </ToolButton>
      </ToolBar>
      <AddressBar onSubmit={(e) => e.preventDefault()}>
        <AddressLabel htmlFor={fieldId}>Address</AddressLabel>
        <AddressField>
          {pathIcon}
          <input id={fieldId} type="text" defaultValue={path} />
          <DropButton type="button" aria-label="Show addresses">
            <Chevron />
          </DropButton>
        </AddressField>
        <GoButton type="submit">
          <GoIcon />
          Go
        </GoButton>
      </AddressBar>
    </>
  );
}

function TaskPanel({ title, links, collapsible }) {
  return (
    <section>
      <PanelHead>
        {title}
        {collapsible && <CollapseIcon />}
      </PanelHead>
      {links && (
        <PanelList>
          {links.map(([label, Icon]) => (
            <li key={label}>
              <a href="#">
                <Icon />
                {label}
              </a>
            </li>
          ))}
        </PanelList>
      )}
    </section>
  );
}

function WinntWindow() {
  return (
    <MainWindow>
      <WindowChrome title="WINNT" icon={<OpenSmallFolder />} path="C:\WINNT" pathIcon={<SmallFolder />} active={false} />
      <WindowBody $edge>
        <TaskPane>
          <TaskPanel title="File and Folder Tasks" links={fileTasks} collapsible />
          <TaskPanel title="Other Places" links={otherPlaces} />
          <TaskPanel title="Details" />
        </TaskPane>
        <IconGrid>
          {Array.from({ length: 9 }, (_, i) => (
            <IconCell key={i} $column={i + 1} $hidden={i > 0}>
              <FolderShape size={32} />
            </IconCell>
          ))}
          {lastColumn.map((file, i) => (
            <IconCell key={i} $column={10} $hidden={file.hidden} $compressed={file.compressed}>
              {file.log ? <LogFile /> : <FolderShape size={32} />}
              {file.name}
            </IconCell>
          ))}
        </IconGrid>
        <ScrollBar>
          <ScrollButton type="button" aria-label="Scroll up">
            <Chevron up />
          </ScrollButton>
          <ScrollTrack>
            <ScrollThumb>
              <svg width="8" height="8" viewBox="0 0 8 8">
                <path d="M0 .5h7M0 2.500h7M0 4.500h7M0 6.500h7" stroke="#999" />
              </svg>
            </ScrollThumb>
          </ScrollTrack>
          <ScrollButton type="button" aria-label="Scroll down">
            <Chevron />
          </ScrollButton>
        </ScrollBar>
      </WindowBody>
    </MainWindow>
  );
}

function DocumentsWindow() {
  return (
    <FloatingWindow>
      <WindowChrome title="My Documents" icon={<OpenSmallFolder content />} path="My Documents" pathIcon={<DocsIcon />} active />
      <WindowBody>
        <TreePane>
          <TreeHead>
            Folders
            <button type="button" aria-label="Close folders">
              <svg width="10" height="10" viewBox="0 0 10 10">
                <path d="M1.500 1.500 8.500 8.500M8.500 1.500 1.500 8.500" stroke="#000" strokeWidth="1.500" />
              </svg>
            </button>
          </TreeHead>
          <Tree>
            {tree.map((node) => (
              <TreeRow key={node.name} $level={node.level}>
                {node.level > 0 && (
                  <ExpandSlot>
                    {node.open !== undefined && (
                      <ExpandButton type="button" aria-label={node.open ? "Collapse" : "Expand"}>
                        <Expander open={node.open} />
                      </ExpandButton>
                    )}
                  </ExpandSlot>
                )}
                {node.icon}
                <TreeLabel $selected={node.selected}>{node.name}</TreeLabel>
              </TreeRow>
            ))}
          </Tree>
        </TreePane>
        <TileGrid>
          {tiles.map((tile) => (
            <Tile key={tile.name}>
              {tile.icon}
              <div>
                {tile.name}
                {tile.details?.map((line) => (
                  <small key={line}>{line}</small>
                ))}
              </div>
            </Tile>
          ))}
        </TileGrid>
      </WindowBody>
    </FloatingWindow>
  );
}

function App() {
  return (
    <Desktop>
      <GlobalStyle />
      <Gradients />
      <Workspace>
        <WinntWindow />
        <DocumentsWindow />
        <Pointer width="16" height="22" viewBox="0 0 16 22">
          <path d="M3 3v16l4-3 3 5 3-1-2-5h4z" fill="#000" opacity=".2" />
          <path d="M.7 1.500V16L4.200 12.800 7 19l2.500-1L7 12H11.500z" fill="#fff" stroke="#000" />
        </Pointer>
      </Workspace>
      <TaskBar>
        <StartButton type="button">
          <FlagIcon size={21} />
          start
        </StartButton>
        {tasks.map((task) => (
          <TaskButton key={task.name} type="button" $active={task.active}>
            {task.icon}
            {task.name}
          </TaskButton>
        ))}
        <KeyboardSlot>
          <KeyboardIcon />
        </KeyboardSlot>
        <Tray>
          <ShieldIcon />
          <SafelyRemoveIcon />
          <FindTrayIcon />
          <time>9:20 AM</time>
        </Tray>
      </TaskBar>
    </Desktop>
  );
}

export default App;
